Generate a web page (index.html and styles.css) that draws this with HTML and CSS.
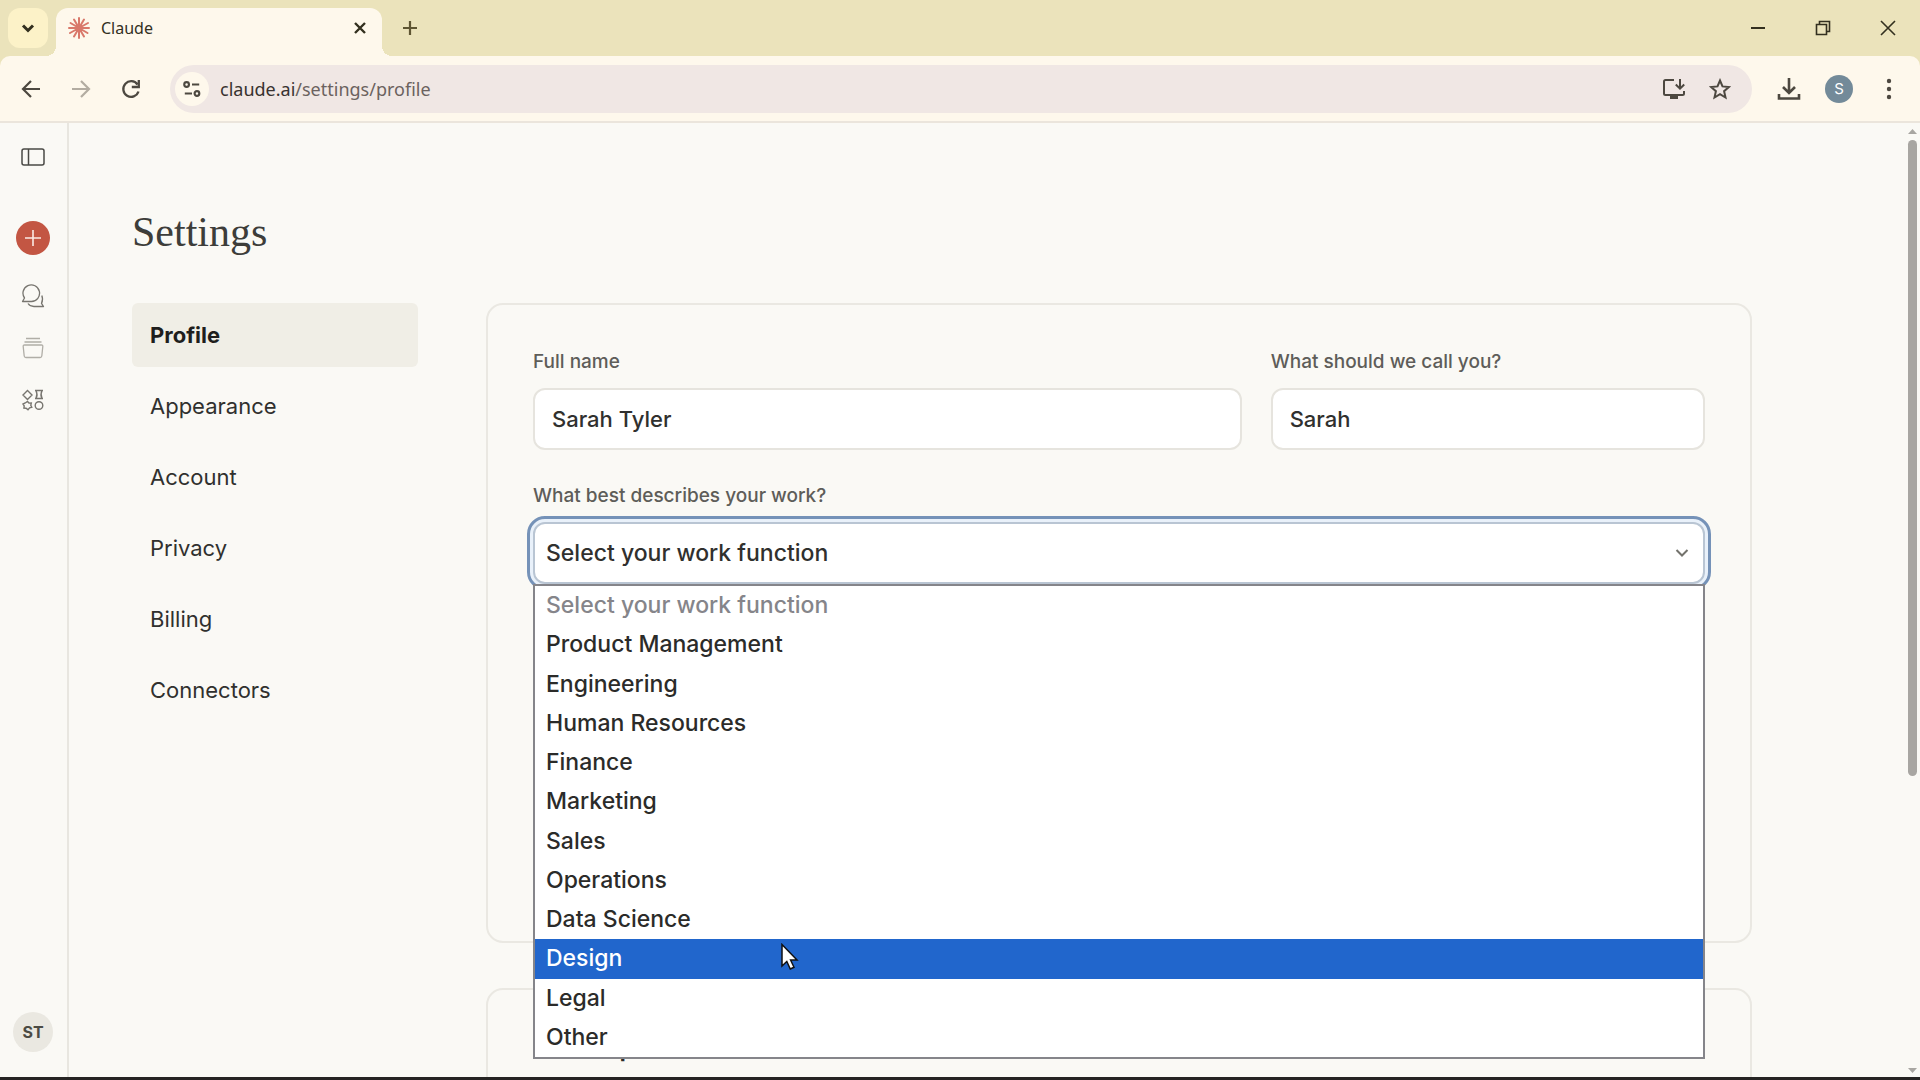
FILE: index.html
```html
<!DOCTYPE html>
<html lang="en">
<head>
  <meta charset="UTF-8">
  <title>Claude</title>
  <link rel="stylesheet" href="styles.css">
</head>
<body>
  <div class="tabstrip">
    <button class="tab-search" aria-label="Search tabs">
      <svg width="14" height="14" viewBox="0 0 14 14" fill="none" stroke="currentColor" stroke-width="3"><path d="M2 4.500l5 5 5-5"/></svg>
    </button>
    <div class="tab">
      <svg class="favicon" width="22" height="22" viewBox="0 0 22 22" stroke="#d9786a" stroke-width="2" stroke-linecap="round"><path d="M11 11V1M11 11l5-8.500M11 11l9-5M11 11h10M11 11l8.500 5M11 11l5 8.500M11 11v10M11 11l-5 8.500M11 11l-9 5M11 11H1M11 11L2.500 6M11 11L6 2.500"/></svg>
      <span class="tab-title">Claude</span>
      <button class="tab-close" aria-label="Close tab">
        <svg width="12" height="12" viewBox="0 0 12 12" stroke="currentColor" stroke-width="2.400"><path d="M1 1l10 10M11 1L1 11"/></svg>
      </button>
    </div>
    <button class="new-tab" aria-label="New tab">
      <svg width="16" height="16" viewBox="0 0 16 16" stroke="currentColor" stroke-width="2.200"><path d="M8 1v14M1 8h14"/></svg>
    </button>
    <div class="window-buttons">
      <button aria-label="Minimize"><svg width="16" height="16" viewBox="0 0 16 16" stroke="currentColor" stroke-width="2"><path d="M1 8h14"/></svg></button>
      <button aria-label="Restore"><svg width="16" height="16" viewBox="0 0 16 16" fill="none" stroke="currentColor" stroke-width="1.600"><path d="M1.500 4.500h10v10h-10zM4.500 4.500v-3h10v10h-3"/></svg></button>
      <button aria-label="Close"><svg width="16" height="16" viewBox="0 0 16 16" stroke="currentColor" stroke-width="1.600"><path d="M1 1l14 14M15 1L1 15"/></svg></button>
    </div>
  </div>

  <div class="toolbar">
    <button class="tool" aria-label="Back">
      <svg width="20" height="20" viewBox="0 0 20 20" fill="none" stroke="currentColor" stroke-width="2.200"><path d="M19 10H3M10 2l-8 8 8 8"/></svg>
    </button>
    <button class="tool" aria-label="Forward" disabled>
      <svg width="20" height="20" viewBox="0 0 20 20" fill="none" stroke="currentColor" stroke-width="2.200"><path d="M1 10h16M10 2l8 8-8 8"/></svg>
    </button>
    <button class="tool" aria-label="Reload">
      <svg width="20" height="20" viewBox="0 0 20 20" fill="none" stroke="currentColor" stroke-width="2.300"><path d="M16.500 5.500A7.800 7.800 0 1 0 17.500 12.500M17.800 1v7h-7"/></svg>
    </button>
    <div class="omnibox">
      <button class="site-info" aria-label="View site information">
        <svg width="18" height="18" viewBox="0 0 20 18" fill="none" stroke="currentColor" stroke-width="2.400"><circle cx="4" cy="4" r="2.600"/><path d="M10 4h8M2 14h8"/><circle cx="15.500" cy="14" r="2.600"/></svg>
      </button>
      <div class="url"><span class="host">claude.ai</span>/settings/profile</div>
      <button class="tool" aria-label="Install app">
        <svg width="24" height="22" viewBox="0 0 24 22" fill="none" stroke="currentColor" stroke-width="2"><path d="M12 2H3.500Q2 2 2 3.500v12Q2 17 3.500 17h17q1.500 0 1.500-1.500V13M18 1v9M13.800 6.500L18 10.700l4.200-4.200"/><path d="M8 19.500h8" stroke-width="3"/></svg>
      </button>
      <button class="tool" aria-label="Bookmark this tab">
        <svg width="22" height="22" viewBox="0 0 22 22" fill="none" stroke="currentColor" stroke-width="2"><path d="M11 2.500l2.500 5.900 6.400.6-4.800 4.200 1.400 6.300-5.500-3.300-5.500 3.300 1.400-6.300L2.100 9l6.400-.6z"/></svg>
      </button>
    </div>
    <button class="tool downloads" aria-label="Downloads">
      <svg width="24" height="24" viewBox="0 0 24 24" fill="none" stroke="currentColor" stroke-width="2.600"><path d="M12 1v15M6 10l6 6 6-6M2 17v4.500h20V17"/></svg>
    </button>
    <button class="chrome-avatar">S</button>
    <button class="tool" aria-label="Menu">
      <svg width="6" height="22" viewBox="0 0 6 22" fill="currentColor"><circle cx="3" cy="3" r="2.200"/><circle cx="3" cy="11" r="2.200"/><circle cx="3" cy="19" r="2.200"/></svg>
    </button>
  </div>

  <div class="page">
    <aside class="rail">
      <button class="rail-button rail-toggle" aria-label="Open sidebar">
        <svg width="24" height="18" viewBox="0 0 24 18" fill="none" stroke="currentColor" stroke-width="1.500"><rect x="1" y="1" width="22" height="16" rx="2"/><path d="M7.500 1v16"/></svg>
      </button>
      <button class="rail-new" aria-label="New chat">
        <svg width="16" height="16" viewBox="0 0 16 16" stroke="currentColor" stroke-width="1.600"><path d="M8 0v16M0 8h16"/></svg>
      </button>
      <button class="rail-button" aria-label="Chats">
        <svg width="24" height="24" viewBox="0 0 24 24" fill="none" stroke="currentColor" stroke-width="1.300" stroke-linejoin="round"><path d="M1.500 17.500l2-3.500A8.300 8.300 0 1 1 10.500 17.500z"/><path d="M7 19.500Q9 22.500 13 22.500h9.500l-2-3.200Q22.500 15.500 20.800 11.500"/></svg>
      </button>
      <button class="rail-button faint" aria-label="Projects">
        <svg width="24" height="24" viewBox="0 0 24 24" fill="none" stroke="currentColor" stroke-width="1.300"><path d="M5 2.500h14M3.500 6h17M3.500 9h17q1.500 0 1.300 1.500l-1 9.500q-.2 1.500-1.700 1.500H4.900q-1.500 0-1.700-1.500l-1-9.500Q2 9 3.500 9z"/></svg>
      </button>
      <button class="rail-button" aria-label="Artifacts">
        <svg width="24" height="24" viewBox="0 0 24 24" fill="none" stroke="currentColor" stroke-width="1.400"><path d="M6.500 2.500L11 7l-4.500 4.500L2 7zM14 2.500h8M14 10.500h8M15 2.500q2 4 0 8M21 2.500q-2 4 0 8"/><path d="M6.500 13.500l1.500 1.600 2.300-.1-.5 2.300 1 2-2.200.6-1.600 1.800-1.900-1.500-2.200-.1.300-2.300-1.200-1.800 2.200-1z"/><circle cx="18" cy="17.500" r="3.800"/></svg>
      </button>
      <button class="rail-avatar">ST</button>
    </aside>

    <main class="main">
      <h1>Settings</h1>
      <div class="settings">
        <nav class="nav">
          <a href="#profile" class="active">Profile</a>
          <a href="#appearance">Appearance</a>
          <a href="#account">Account</a>
          <a href="#privacy">Privacy</a>
          <a href="#billing">Billing</a>
          <a href="#connectors">Connectors</a>
        </nav>
        <div class="cards">
          <form class="card profile-card">
            <div class="names">
              <div class="field">
                <label for="fullname">Full name</label>
                <input type="text" id="fullname" value="Sarah Tyler">
              </div>
              <div class="field">
                <label for="nickname">What should we call you?</label>
                <input type="text" id="nickname" value="Sarah">
              </div>
            </div>
            <div class="field work">
              <label for="work">What best describes your work?</label>
              <div class="select-wrap">
                <select id="work">
                  <option>Select your work function</option>
                </select>
                <svg class="chevron" width="14" height="10" viewBox="0 0 14 10" fill="none" stroke="currentColor" stroke-width="2"><path d="M1.500 2L7 7.500 12.500 2"/></svg>
                <ul class="options" role="listbox" aria-label="Work function">
                  <li class="placeholder" role="option">Select your work function</li>
                  <li role="option">Product Management</li>
                  <li role="option">Engineering</li>
                  <li role="option">Human Resources</li>
                  <li role="option">Finance</li>
                  <li role="option">Marketing</li>
                  <li role="option">Sales</li>
                  <li role="option">Operations</li>
                  <li role="option">Data Science</li>
                  <li class="hovered" role="option" aria-selected="true">Design
                    <svg class="cursor" width="18" height="28" viewBox="0 0 18 28" fill="#fff" stroke="#111" stroke-width="1.500"><path d="M1 1.500v21.500l4.800-4.500 3.500 7.500 3.700-1.700-3.400-7.300h6.400z"/></svg>
                  </li>
                  <li role="option">Legal</li>
                  <li role="option">Other</li>
                </ul>
              </div>
            </div>
          </form>
          <section class="card">
            <h2>Feature preview</h2>
          </section>
        </div>
      </div>
    </main>

    <div class="scrollbar">
      <svg width="9" height="5" viewBox="0 0 9 5" fill="currentColor"><path d="M4.500 0L9 5H0z"/></svg>
      <div class="track"><div class="thumb"></div></div>
      <svg width="9" height="5" viewBox="0 0 9 5" fill="currentColor"><path d="M0 0h9L4.500 5z"/></svg>
    </div>
  </div>
  <div class="taskbar"></div>
</body>
</html>
```

FILE: styles.css
```css
* {
  box-sizing: border-box;
}
body {
  margin: 0;
  height: 100vh;
  display: flex;
  flex-direction: column;
  overflow: hidden;
  background: #ebe3bb;
  color: #2b2b29;
  font-family: Inter, "Liberation Sans", sans-serif;
}
button {
  display: flex;
  align-items: center;
  justify-content: center;
  padding: 0;
  border: 0;
  background: none;
  color: inherit;
  font-family: inherit;
}
svg {
  display: block;
  flex: none;
}

/* browser tabs */
.tabstrip {
  display: flex;
  align-items: center;
  height: 56px;
  flex: none;
  padding-left: 8px;
  color: #33301f;
  font-family: "Noto Sans", sans-serif;
}
.tab-search {
  width: 40px;
  height: 40px;
  border-radius: 12px;
  background: #fcf2c8;
}
.tab {
  position: relative;
  align-self: flex-end;
  display: flex;
  align-items: center;
  width: 326px;
  height: 48px;
  margin-left: 8px;
  padding: 0 16px 8px 12px;
  border-radius: 12px 12px 0 0;
  background: #fef8ec;
}
.tab::before,
.tab::after {
  content: "";
  position: absolute;
  bottom: 0;
  width: 10px;
  height: 10px;
}
.tab::before {
  left: -10px;
  background: radial-gradient(circle at 0 0, transparent 10px, #fef8ec 10px);
}
.tab::after {
  right: -10px;
  background: radial-gradient(circle at 100% 0, transparent 10px, #fef8ec 10px);
}
.tab-title {
  flex: 1;
  margin-left: 11px;
  font-size: 16px;
}
.new-tab {
  width: 40px;
  height: 40px;
  margin-left: 8px;
  color: #5e5532;
}
.window-buttons {
  display: flex;
  margin-left: auto;
}
.window-buttons button {
  width: 65px;
  height: 56px;
}

/* address bar */
.toolbar {
  display: flex;
  align-items: center;
  height: 67px;
  flex: none;
  padding: 0 10px 0 11px;
  border-bottom: 2px solid #ebe5dc;
  border-radius: 10px 10px 0 0;
  background: #fef8ec;
  color: #4d4840;
}
.tool {
  width: 40px;
  height: 40px;
  margin-right: 10px;
}
.tool:disabled {
  color: #b3aca1;
}
.omnibox {
  display: flex;
  align-items: center;
  flex: 1;
  height: 48px;
  margin-left: 9px;
  padding: 0 4px 0 5px;
  border-radius: 24px;
  background: #f0e7e4;
}
.omnibox .tool {
  width: 36px;
}
.site-info {
  width: 34px;
  height: 34px;
  border-radius: 17px;
  background: #fef8ec;
}
.url {
  flex: 1;
  margin-left: 11px;
  color: #6b625e;
  font-family: "Noto Sans", sans-serif;
  font-size: 18px;
}
.host {
  color: #38322f;
}
.downloads {
  margin: 0 16px 0 17px;
}
.chrome-avatar {
  width: 28px;
  height: 28px;
  margin-right: 21px;
  border-radius: 14px;
  background: #738a99;
  color: #fff;
  font-size: 15px;
}
.toolbar > .tool:last-child {
  width: 30px;
  margin-right: 6px;
}

/* page */
.page {
  display: flex;
  flex: 1;
  min-height: 0;
  background: #faf9f5;
}
.rail {
  display: flex;
  flex-direction: column;
  align-items: center;
  width: 69px;
  flex: none;
  padding: 20px 1px 25px 0;
  border-right: 2px solid #e8e6e0;
  color: #77756f;
}
.rail-button {
  width: 40px;
  height: 28px;
  margin-bottom: 24px;
}
.rail-toggle {
  margin-bottom: 50px;
  color: #4a4945;
}
.rail-new {
  width: 34px;
  height: 34px;
  margin-bottom: 27px;
  border-radius: 17px;
  background: #c35643;
  color: #fbeae5;
}
.faint {
  color: #b0aea7;
}
.rail-avatar {
  width: 40px;
  height: 40px;
  margin-top: auto;
  border-radius: 20px;
  background: #eae8e1;
  color: #4c4b44;
  font-size: 16px;
  font-weight: 700;
}
.main {
  flex: 1;
  min-width: 0;
  padding: 85px 153px 0 63px;
  overflow: hidden;
}
h1 {
  margin: 0 0 47px;
  color: #3d3d3a;
  font-family: "Liberation Serif", serif;
  font-size: 42px;
  font-weight: 400;
  line-height: 48px;
}
.settings {
  display: flex;
  gap: 68px;
}
.nav {
  display: flex;
  flex-direction: column;
  gap: 7px;
  width: 286px;
  flex: none;
}
.nav a {
  padding: 0 18px;
  border-radius: 6px;
  color: #30302e;
  font-size: 22px;
  line-height: 64px;
  text-decoration: none;
}
.nav a.active {
  background: #f0eee6;
  color: #1f1e1d;
  font-weight: 700;
}
.cards {
  display: flex;
  flex-direction: column;
  gap: 45px;
  flex: 1;
}
.card {
  padding: 45px;
  border: 2px solid #eae8e2;
  border-radius: 17px;
}
.profile-card {
  min-height: 640px;
}
.names {
  display: grid;
  grid-template-columns: 62fr 38fr;
  gap: 29px;
}
.field {
  display: flex;
  flex-direction: column;
  gap: 14px;
}
.work {
  margin-top: 34px;
}
label {
  color: #5e5d59;
  font-size: 19px;
  font-weight: 500;
  line-height: 24px;
}
input,
select {
  width: 100%;
  height: 62px;
  border: 2px solid #e6e4de;
  border-radius: 12px;
  background: #fff;
  color: #30302e;
  font-family: inherit;
  font-size: 22px;
  font-weight: 500;
}
input {
  padding: 0 17px;
}
select {
  appearance: none;
  display: block;
  padding: 0 11px;
  border-color: #b9c5d3;
  outline: 3px solid #7592b8;
  outline-offset: 3px;
  box-shadow: 0 0 0 3px #e9f1fa;
  font-size: 23px;
}
.select-wrap {
  position: relative;
}
.chevron {
  position: absolute;
  top: 26px;
  right: 16px;
  color: #73726c;
}
.options {
  position: absolute;
  top: 62px;
  left: 0;
  right: 0;
  display: grid;
  grid-auto-rows: 1fr;
  min-height: 475px;
  margin: 0;
  padding: 0;
  border: 2px solid #85858a;
  background: #fff;
  list-style: none;
  font-size: 23px;
  font-weight: 500;
  line-height: 39px;
}
.options li {
  position: relative;
  padding: 0 11px;
}
.options .placeholder {
  color: #85858a;
}
.options .hovered {
  background: #2166cc;
  color: #fff;
}
.cursor {
  position: absolute;
  top: 4px;
  left: 246px;
}
h2 {
  margin: 0;
  font-size: 22px;
  font-weight: 700;
  line-height: 28px;
}
.scrollbar {
  display: flex;
  flex-direction: column;
  align-items: center;
  width: 15px;
  flex: none;
  padding: 6px 0 4px 0;
  color: #a8a6a2;
}
.track {
  flex: 1;
  padding: 6px 0;
}
.thumb {
  width: 9px;
  height: 69%;
  border-radius: 5px;
  background: #a8a6a2;
}
.taskbar {
  height: 3px;
  flex: none;
  background: #262423;
}
```
